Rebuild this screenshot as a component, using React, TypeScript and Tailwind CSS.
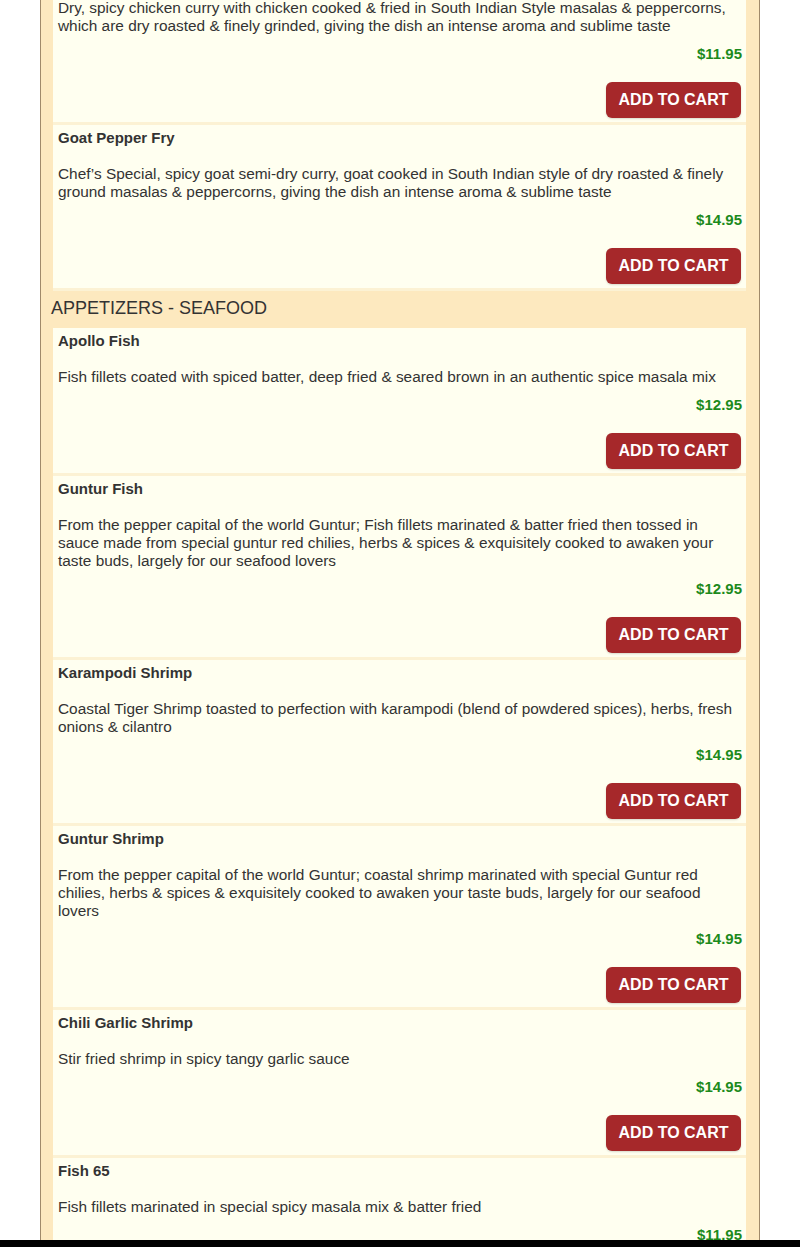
import React from 'react';

interface MenuItem {
  name: string;
  desc: string;
  price: string;
}

const chickenItems: MenuItem[] = [
  {
    name: 'Chicken Pepper Fry',
    desc: 'Dry, spicy chicken curry with chicken cooked & fried in South Indian Style masalas & peppercorns, which are dry roasted & finely grinded, giving the dish an intense aroma and sublime taste',
    price: '$11.95',
  },
  {
    name: 'Goat Pepper Fry',
    desc: 'Chef’s Special, spicy goat semi-dry curry, goat cooked in South Indian style of dry roasted & finely ground masalas & peppercorns, giving the dish an intense aroma & sublime taste',
    price: '$14.95',
  },
];

const seafoodItems: MenuItem[] = [
  {
    name: 'Apollo Fish',
    desc: 'Fish fillets coated with spiced batter, deep fried & seared brown in an authentic spice masala mix',
    price: '$12.95',
  },
  {
    name: 'Guntur Fish',
    desc: 'From the pepper capital of the world Guntur; Fish fillets marinated & batter fried then tossed in sauce made from special guntur red chilies, herbs & spices & exquisitely cooked to awaken your taste buds, largely for our seafood lovers',
    price: '$12.95',
  },
  {
    name: 'Karampodi Shrimp',
    desc: 'Coastal Tiger Shrimp toasted to perfection with karampodi (blend of powdered spices), herbs, fresh onions & cilantro',
    price: '$14.95',
  },
  {
    name: 'Guntur Shrimp',
    desc: 'From the pepper capital of the world Guntur; coastal shrimp marinated with special Guntur red chilies, herbs & spices & exquisitely cooked to awaken your taste buds, largely for our seafood lovers',
    price: '$14.95',
  },
  {
    name: 'Chili Garlic Shrimp',
    desc: 'Stir fried shrimp in spicy tangy garlic sauce',
    price: '$14.95',
  },
  {
    name: 'Fish 65',
    desc: 'Fish fillets marinated in special spicy masala mix & batter fried',
    price: '$11.95',
  },
];

function ItemRow({ item }: { item: MenuItem }) {
  return (
    <div className="bg-[#fffff0] border-b-[3px] border-[#fcf2d4] pt-[4px] pb-[4px] pl-[5px] pr-[4px]">
      <div className="font-bold text-[15px] leading-[18px] text-[#333]">{item.name}</div>
      <div className="mt-[18px] text-[15.4px] leading-[18px] text-[#333]">{item.desc}</div>
      <div className="mt-[10px] text-right font-bold text-[15px] leading-[18px] text-[#1c8a1c]">
        {item.price}
      </div>
      <div className="mt-[19px] flex justify-end pr-[1px]">
        <button className="h-[36px] w-[135px] rounded-[6px] bg-[#a6282a] text-white font-bold text-[16px] shadow-[0_1px_2px_rgba(0,0,0,0.15)]">
          ADD TO CART
        </button>
      </div>
    </div>
  );
}

export default function App() {
  return (
    <div className="h-[1247px] bg-white font-['Liberation_Sans',Arial,sans-serif] overflow-hidden">
      <div className="mx-[40px] -mt-[41px] border-x border-[#a08a6a] bg-[#fde9bf] pl-[12px] pr-[13px] pb-[40px]">
        {chickenItems.map((item) => (
          <ItemRow key={item.name} item={item} />
        ))}
        <div className="-ml-[2px] pt-[6px] pb-[9px] text-[18px] leading-[22px] text-[#333]">
          APPETIZERS - SEAFOOD
        </div>
        {seafoodItems.map((item) => (
          <ItemRow key={item.name} item={item} />
        ))}
      </div>
      <div className="fixed bottom-0 left-0 right-0 h-[7px] bg-black" />
    </div>
  );
}
